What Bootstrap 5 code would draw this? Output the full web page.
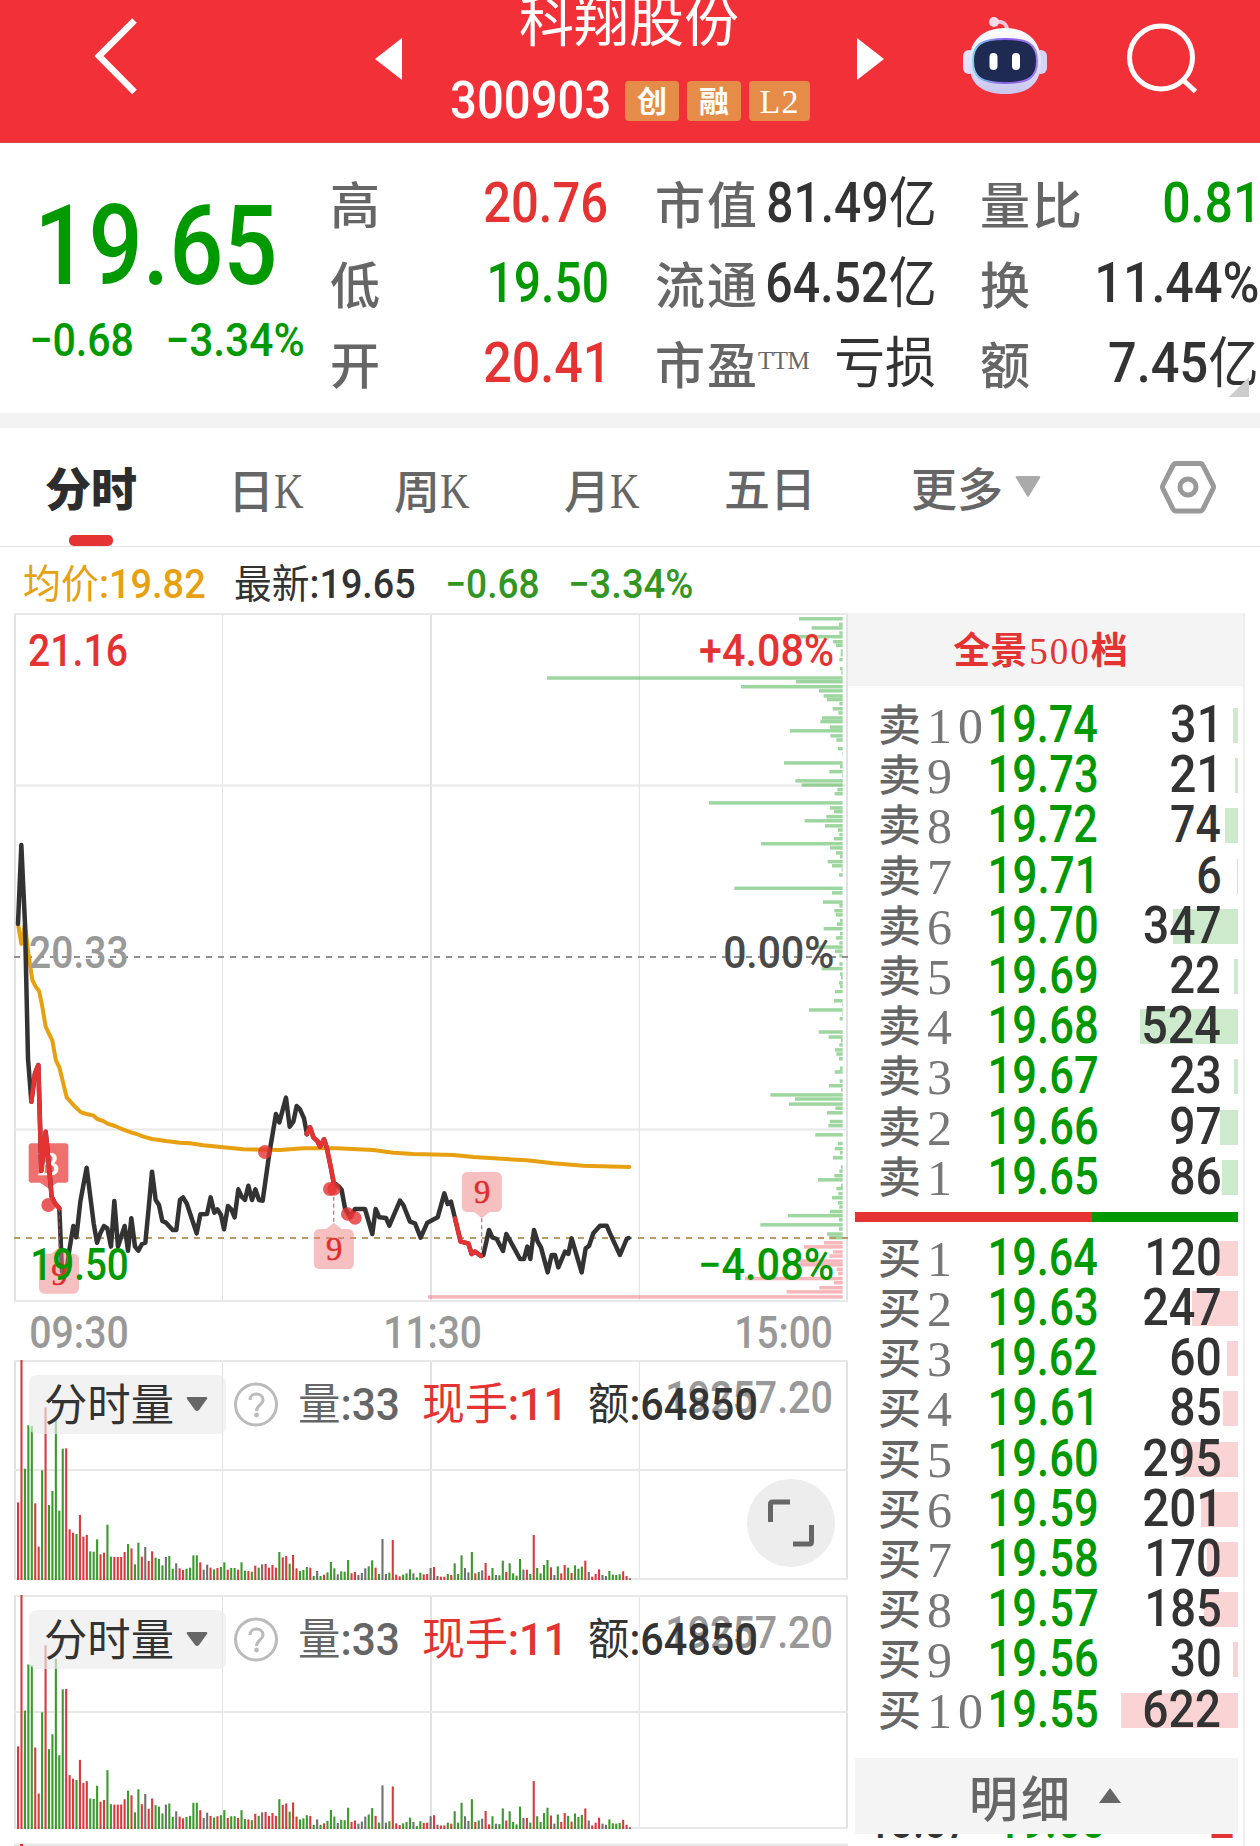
<!DOCTYPE html>
<html lang="zh-CN">
<head>
<meta charset="utf-8">
<meta name="viewport" content="width=device-width, initial-scale=1">
<title>科翔股份 300903</title>
<link href="https://cdn.jsdelivr.net/npm/bootstrap@5.3.0/dist/css/bootstrap.min.css" rel="stylesheet">
<style>
  :root { --up:#e53232; --down:#009900; --ink:#333; --soft:#666; }
  body { width:1260px; height:1846px; overflow:hidden; background:#fff; color:var(--ink);
         font-family:Roboto,"Noto Sans CJK SC",sans-serif; font-weight:500; }
  svg { display:block; flex:none; }
  .up { color:var(--up); } .down { color:var(--down); } .soft { color:var(--soft); }
  .kai { font-family:"Liberation Serif","Noto Sans CJK SC",serif; font-weight:500; color:var(--soft); white-space:nowrap; }
  .fit { display:inline-block; white-space:nowrap; flex:none; }
  .fit > span { display:inline-block; transform-origin:0 50%; }
  .cjk { font-weight:400; }

  .topbar { height:143px; background:#f23037; color:#fff; border-bottom:1px solid #d8464b; }
  .topbar .prev-btn { margin-left:235px; }
  .topbar .ident { margin-left:49px; width:359px; }
  .topbar .title { font-size:55px; line-height:60px; margin-top:-8px; margin-bottom:29px; font-weight:400; text-align:center; padding-right:4px; }
  .topbar .code { font-size:52px; line-height:42px; height:40px; }
  .tagbox { height:40px; width:54px; border-radius:4px; background:#e58c48; color:#fff; font:700 30px/41px "Liberation Serif","Noto Sans CJK SC",serif; text-align:center; }
  .tagbox.wide { width:61px; font-weight:400; font-size:34px; letter-spacing:1px; }

  .quote { height:270px; padding-top:20px; position:relative; }
  .quote .main { width:330px; padding-left:32px; }
  .quote .big { font-size:111px; line-height:80px; padding-top:43px; margin-left:10px; }
  .quote .delta { font-size:46px; line-height:40px; margin-top:34px; }
  .quote .line { height:80px; line-height:81px; font-size:55px; }
  .quote .line .kai { font-size:50px; letter-spacing:2px; line-height:89px; }
  .quote sup { display:inline-block; width:54px; font-size:25px; letter-spacing:-.5px; top:-15px; left:-1px; line-height:0; vertical-align:baseline; position:relative; }
  .colA { width:277px; } .colB { width:279px; margin-left:48px; } .colC { width:278px; margin-left:46px; }
  .corner { position:absolute; right:11px; bottom:16px; }
  .band { height:15px; background:#f3f3f3; }

  .tabs { height:119px; border-bottom:1px solid #e2e2e2; line-height:118px; font-size:47px; }
  .tabs .kai { font-size:46px; line-height:126px; }
  .tabs .kay { display:inline-block; font-size:50px; transform:scaleX(.82); transform-origin:0 50%; }
  .tabs .on { color:#2d2d2d; font-weight:900; position:relative; }
  .tabs .on::after { content:""; position:absolute; left:24px; bottom:0; width:44px; height:11px; border-radius:5px; background:var(--up); }

  .latest { height:66px; line-height:75px; font-size:40px; padding-left:24px; }
  .lower { height:1233px; }
  .charts { width:848px; }
  .volume { position:relative; height:235px; }
  .legend { position:absolute; left:29px; top:15px; height:59px; width:815px; line-height:61px; font-size:44px; }
  .picker { width:197px; height:59px; border-radius:8px; background:rgba(235,235,235,.65); padding-left:16px; line-height:63px; }
  .scale { position:absolute; left:668px; top:8px; line-height:60px; font-size:44px; color:#999; }
  .expand { position:absolute; left:747px; top:119px; }

  .book { width:397px; border-right:2px solid #eee; }
  .book .head { height:73px; background:#f4f4f4; text-align:center; }
  .book .head .kai { color:var(--up); font-size:37px; line-height:77px; padding-right:10px; }
  .book .head .kai span { letter-spacing:2px; padding-left:2px; }
  .lvl { height:50.2px; line-height:54px; font-size:51px; position:relative; padding-left:30px; padding-right:23px; }
  .lvl > * { position:relative; } .lvl > i { position:absolute; }
  .lvl .kai { font-size:43px; width:113px; line-height:58px; display:flex; }
  .lvl .kai b { font-size:50px; line-height:56px; font-weight:400; margin-left:6px; letter-spacing:6px; color:#777; }
  .lvl i { right:5px; top:10px; height:35px; }
  .sell i { background:#cdeacd; } .buy i { background:#fad4d4; }
  .strength { height:10px; margin:12px 5px 9px 7px; }
  .detail { height:76px; margin:25px 5px 0 7px; background:#f4f4f4; }
  .detail .kai { font-size:49px; letter-spacing:3px; line-height:86px; margin-left:114px; }
  .ticks { height:6px; overflow:hidden; font-size:50px; position:relative; padding:0 10px 0 23px; }
  .ticks > div { line-height:36px; height:36px; margin-top:-31px; }
</style>
</head>
<body>
<header class="topbar d-flex align-items-start">
  <svg width="50" height="143" style="margin-left:90px" viewBox="90 0 50 143"><path d="M134.500 20.500L99 56l35.500 36" fill="none" stroke="#fff" stroke-width="6.500"/></svg>
  <svg class="prev-btn" width="27" height="143" viewBox="375 0 27 143"><path d="M375 59l27-21v42z" fill="#fff"/></svg>
  <div class="ident">
    <div class="title"><span class="fit" data-w="218">科翔股份</span></div>
    <div class="code d-flex align-items-center"><span class="fit" data-w="158">300903</span>
      <span class="tagbox" style="margin-left:16px">创</span><span class="tagbox ms-2">融</span><span class="tagbox wide ms-2">L2</span></div>
  </div>
  <svg width="27" height="143" style="margin-left:47px" viewBox="857 0 27 143"><path d="M884 59l-27-21v42z" fill="#fff"/></svg>
  <svg width="86" height="143" style="margin-left:78px" viewBox="962 0 86 143">
    <defs><linearGradient id="shell" x1="0" y1="0" x2="0" y2="1"><stop offset="0" stop-color="#fff"/><stop offset="1" stop-color="#c9c6ef"/></linearGradient>
    <linearGradient id="rim" x1="0" y1="0" x2="1" y2="0"><stop offset="0" stop-color="#7fd0ee"/><stop offset=".5" stop-color="#8a5be8"/><stop offset="1" stop-color="#9a7bf0"/></linearGradient></defs>
    <path d="M995 22q12-2 12 9" fill="none" stroke="#f0c4d8" stroke-width="4"/><circle cx="994" cy="22" r="5" fill="#f4dbe9"/>
    <rect x="963" y="50" width="12" height="24" rx="6" fill="#e3e2fa"/><rect x="1035" y="50" width="12" height="24" rx="6" fill="#d5d4f6"/>
    <path d="M1005 28C1028 28 1041 42 1041 62C1041 84 1028 94 1005 94S969 84 969 62C969 42 982 28 1005 28Z" fill="url(#shell)"/>
    <path d="M1005 39C1028 39 1037 44 1037 61S1028 83 1005 83S973 78 973 61S982 39 1005 39Z" fill="#1e2a52" stroke="url(#rim)" stroke-width="2"/>
    <rect x="989.500" y="53" width="8" height="17" rx="4" fill="#fff"/><rect x="1012" y="53" width="8" height="17" rx="4" fill="#fff"/>
  </svg>
  <svg width="76" height="143" style="margin-left:76px" viewBox="1124 0 76 143"><g fill="none" stroke="#fff" stroke-width="5"><circle cx="1161" cy="57.500" r="31.500"/><path d="M1182 79l13.500 12.500"/></g></svg>
</header>

<section class="quote d-flex">
  <div class="main down">
    <div class="big"><span class="fit" data-w="232">19.65</span></div>
    <div class="delta d-flex"><span class="fit" data-w="100">−0.68</span><span class="fit" data-w="135" style="margin-left:36px">−3.34%</span></div>
  </div>
  <div class="colA">
    <div class="line d-flex justify-content-between"><span class="kai">高</span><span class="fit up" data-w="122">20.76</span></div>
    <div class="line d-flex justify-content-between"><span class="kai">低</span><span class="fit down" data-w="117">19.50</span></div>
    <div class="line d-flex justify-content-between"><span class="kai">开</span><span class="fit up" data-w="117" style="margin-right:5px">20.41</span></div>
  </div>
  <div class="colB">
    <div class="line d-flex justify-content-between"><span class="kai">市值</span><span class="fit" data-w="166"  data-mix>81.49亿</span></div>
    <div class="line d-flex justify-content-between"><span class="kai">流通</span><span class="fit" data-w="166" data-mix>64.52亿</span></div>
    <div class="line d-flex justify-content-between"><span class="kai">市盈<sup>TTM</sup></span><span class="fit cjk" data-w="98">亏损</span></div>
  </div>
  <div class="colC">
    <div class="line d-flex justify-content-between"><span class="kai">量比</span><span class="fit down" data-w="88" style="margin-right:6px">0.81</span></div>
    <div class="line d-flex justify-content-between"><span class="kai">换</span><span class="fit" data-w="160">11.44%</span></div>
    <div class="line d-flex justify-content-between"><span class="kai">额</span><span class="fit" data-w="147" style="margin-right:2px" data-mix>7.45亿</span></div>
  </div>
  <svg class="corner" width="20" height="20"><path d="M20 0v20H0z" fill="#ccc"/></svg>
</section>
<div class="band"></div>

<nav class="tabs d-flex">
  <span class="kai on" style="margin-left:45px;width:94px">分时</span>
  <span class="kai" style="margin-left:89px;width:162px">日<span class="kay">K</span></span>
  <span class="kai" style="width:170px;margin-left:4px">周<span class="kay">K</span></span>
  <span class="kai" style="width:160px">月<span class="kay">K</span></span>
  <span class="kai" style="width:187px">五日</span>
  <span class="kai" style="width:94px">更多</span>
  <svg width="26" height="118" style="margin-left:10px" viewBox="0 0 26 118"><path d="M2 48h22q2 0 1 2L14 68q-1 2-2 0L1 50q-1-2 1-2z" fill="#aaa"/></svg>
  <svg width="60" height="118" style="margin-left:117px" viewBox="0 0 60 118"><g fill="none" stroke="#999" stroke-width="5" stroke-linejoin="round"><path d="M18 35.500h24q2 0 3 2L55 57q1 2 0 4L45 81q-1 2-3 2H18q-2 0-3-2L5 61q-1-2 0-4l10-19.500q1-2 3-2z"/><circle cx="30" cy="59" r="8"/></g></svg>
</nav>

<div class="latest d-flex">
  <span class="fit" data-w="181" data-mix style="color:#e6a010">均价:19.82</span>
  <span class="fit" data-w="180" data-mix style="margin-left:30px">最新:19.65</span>
  <span class="fit" data-w="90" style="margin-left:33px;color:#329623">−0.68</span>
  <span class="fit" data-w="121" style="margin-left:33px;color:#329623">−3.34%</span>
</div>

<main class="lower d-flex">
  <div class="charts">
    <svg id="minute" width="848" height="747" viewBox="0 613 848 747"></svg>
    <div class="volume" data-h="220"></div>
    <div class="volume" data-h="234"></div>
    <svg width="848" height="16" viewBox="0 0 848 16"><path d="M14 15h834" stroke="#e8e8e8" stroke-width="3"/><path d="M21.500 14v2" stroke="#e53232" stroke-width="3"/></svg>
  </div>
  <aside class="book">
    <div class="head"><span class="kai fw-bold">全景<span class="fw-normal">500</span>档</span></div>
    <div class="sell" style="padding-top:12px" id="sells"></div>
    <div class="strength d-flex"><div style="width:62%;background:#e53232"></div><div class="flex-fill" style="background:#009900"></div></div>
    <div class="buy" id="buys"></div>
    <div class="detail d-flex"><span class="kai">明细</span><svg width="22" height="76" style="margin-left:26px"><path d="M0 45l11-15 11 15z" fill="#666"/></svg></div>
    <div class="ticks"><div class="d-flex"><span class="fit" data-w="97">13:57</span><span class="fit down" data-w="104" style="margin-left:32px">19.65</span><span class="fit up ms-auto" data-w="22">2</span></div></div>
  </aside>
</main>

<script src="https://cdn.jsdelivr.net/npm/bootstrap@5.3.0/dist/js/bootstrap.bundle.min.js"></script>
<script>
const FAM = 'Roboto,"Noto Sans CJK SC",sans-serif';
const ctx = document.createElement('canvas').getContext('2d');
const ink = (font, s) => { ctx.font = font; const m = ctx.measureText(s); return { l: m.actualBoundingBoxLeft, w: m.actualBoundingBoxLeft + m.actualBoundingBoxRight }; };

/* svg label whose glyphs run from x0 to x1 */
function label(s, x0, x1, y, fill, size = 44) {
  const k = ink(`500 ${size}px ${FAM}`, s), q = (x1 - x0) / k.w;
  return `<text transform="translate(${x0 + k.l * q} ${y}) scale(${q} 1)" font-size="${size}" fill="${fill}">${s}</text>`;
}

/* order book */
const sells = [['10','19.74',31,5],['9','19.73',21,3],['8','19.72',74,13],['7','19.71',6,1],['6','19.70',347,65],['5','19.69',22,4],['4','19.68',524,98],['3','19.67',23,4],['2','19.66',97,18],['1','19.65',86,16]];
const buys = [['1','19.64',120,22],['2','19.63',247,46],['3','19.62',60,11],['4','19.61',85,15],['5','19.60',295,55],['6','19.59',201,37],['7','19.58',170,31],['8','19.57',185,34],['9','19.56',30,5],['10','19.55',622,117]];
function rows(id, name, list) {
  document.getElementById(id).innerHTML = list.map(([n, p, q, w]) => {
    const t = String(q), one = t.endsWith('1');
    let qw = t.length * 27 - 5; if (t[0] === '1') qw -= 4; if (one) qw -= 5;
    return `<div class="lvl d-flex"><i style="width:${w}px"></i><span class="kai">${name}<b>${n}</b></span>` +
      `<span class="fit down" data-w="${p.endsWith('1') ? 101 : 106}">${p}</span>` +
      `<span class="fit ms-auto" data-w="${qw}" style="margin-right:${one ? 5 : 0}px">${q}</span></div>`;
  }).join('');
}
rows('sells', '卖', sells);
rows('buys', '买', buys);

/* minute chart */
const greenBars = [[41,477],[53,597],[61,515],[72,598],[80,465],[91,579],[99,588],[111,602],[119,602],[130,598],[150,600],[159,604],[170,-279],[178,468],[189,303],[198,537],[209,551],[217,561],[226,598],[237,578],[246,595],[257,546],[265,541],[277,570],[285,450],[296,571],[305,589],[324,594],[335,606],[355,432],[363,600],[374,568],[383,606],[394,466],[403,485],[413,592],[422,584],[442,207],[453,570],[461,582],[472,559],[481,494],[492,555],[501,594],[511,598],[520,582],[531,363],[540,570],[551,588],[559,600],[570,563],[579,576],[588,605],[599,597],[628,283],[638,576],[658,549],[666,598],[677,583],[686,588],[698,600],[706,591],[716,551],[727,600],[736,588],[747,598],[756,528],[765,585],[775,598],[793,598],[803,545],[815,600],[823,603],[834,597],[842,600],[853,585],[873,582],[882,606],[893,507],[901,606],[912,599],[941,536],[952,566],[960,603],[969,598],[980,585],[989,589],[999,597],[1020,600],[1028,584],[1048,599],[1058,567],[1067,603],[1078,391],[1087,465],[1098,447],[1107,586],[1117,561],[1136,569],[1145,565],[1165,526],[1184,594],[1195,584],[1204,600],[1215,579],[1235,603],[1244,598],[1254,583],[1263,534],[1275,603],[1282,589],[1293,595],[1302,576],[1313,594],[1322,598],[1332,570],[1341,444],[1350,597],[1361,361],[1370,597],[1381,561],[1389,567]];
const redBars = [[1400,552],[1409,492],[1420,579],[1429,568],[1440,480],[1448,470],[1458,590],[1467,594],[1478,315],[1487,582],[1498,538],[1507,440],[1518,-636]];
const bars = (list, c) => list.map(([y, x]) => `<rect x="${640 + x / 3}" y="${600 + y / 2.178 - 1.8}" width="${202.700 - x / 3}" height="3.500" fill="${c}"/>`).join('');
const line = (d, c, w) => `<path d="M${d}" stroke="${c}" stroke-width="${w}" fill="none" stroke-linejoin="round" stroke-linecap="round"/>`;
const A = 'transform="translate(0 820) scale(.33333)"', B = 'transform="translate(240 1060) scale(.33333)"';
const grid = (ys, y0, y1) => [15, 222.5, 431, 639.3, 847].map((x, i) => `<path d="M${x} ${y0}V${y1}" stroke="#e2e2e2" stroke-width="${i % 2 ? 1 : 2}"/>`).join('') +
  ys.map(y => `<path d="M14 ${y}H848" stroke="#e8e8e8" stroke-width="2"/>`).join('');

document.getElementById('minute').innerHTML =
  grid([614, 785.5, 1129.5, 1301], 613, 1302) +
  bars(greenBars, 'rgba(40,165,45,.45)') + bars(redBars, 'rgba(235,80,90,.42)') +
  `<path d="M14 957H848" stroke="#909090" stroke-width="2" stroke-dasharray="6 6"/><path d="M14 1238H848" stroke="#b89d66" stroke-width="2" stroke-dasharray="6 6"/>` +
  `<g ${A}><path d="M94 970h103q8 0 8 8v102q0 8-8 8H171L147 1106 120 1088H94q-8 0-8-8V978q0-8 8-8z" fill="#f07070"/>
   <text x="146" y="1066" text-anchor="middle" font-family="Liberation Serif" font-weight="400" font-size="98" fill="#fff" stroke="#fff" stroke-width="2">B</text></g>` +
  `<g ${A}>` +
  line('54,312 64,372 75,312 85,400 97,480 107,500 117,512 126,555 137,620 157,662 168,722 178,742 200,832 222,857 243,877 260,882 281,887 292,897 312,904 322,911 345,918 368,928 395,938 410,942 430,950 456,957 498,963 540,968 570,970 610,976 670,982 730,988 840,990 910,985 1010,985 1120,990 1180,998 1240,1002 1360,1005 1420,1011 1580,1021 1660,1030 1750,1037 1888,1041', '#e6a010', 12) +
  line('54,312 64,75 75,312 84,715 94,845 105,760 115,735 124,1052 137,935 147,1040 155,1130 165,1150 178,1165 186,1355 198,1360 208,1290 220,1218 229,1252 241,1145 260,1043 281,1210 291,1268 301,1240 312,1218 322,1225 333,1280 343,1143 354,1280 374,1218 384,1292 394,1195 405,1280 415,1292 426,1272 436,1268 446,1165 456,1055 467,1140 477,1155 487,1203 498,1208 518,1230 529,1230 540,1140 549,1132 560,1150 590,1240 601,1183 621,1182 632,1132 643,1178 652,1168 663,1185 672,1228 684,1158 694,1168 704,1192 715,1108 725,1130 735,1140 745,1097 756,1140 766,1108 777,1140 788,1142 808,1000 828,882 838,907 858,833 869,920 880,905 890,858 900,868 912,895 921,943', '#333', 13.5) +
  line('94,845 105,760 115,735 124,1052 137,935 147,1040 155,1130 165,1150 178,1165', '#e53232', 13.5) +
  `<path d="M178 1165V1285" stroke="#c33" stroke-width="4" stroke-dasharray="12 9"/></g>` +
  `<g ${B}>` +
  line('200,222 210,202 220,232 232,243 240,260 252,238 260,262 272,320 281,368 295,378 305,390 315,445 330,470 345,447 375,447 397,522 407,447 418,472 438,474 448,497 480,422 490,435 510,485 525,490 542,533 562,488 593,472 613,400 623,432 633,425 645,475 662,545 685,550 695,582 705,575 723,588 730,585 747,510 757,532 770,537 789,573 799,522 820,560 840,597 852,597 862,560 871,597 882,510 893,545 903,562 923,637 935,585 945,585 955,622 975,575 985,582 995,535 1025,637 1037,565 1047,558 1060,520 1080,497 1100,497 1110,520 1140,585 1160,537 1166,534', '#333', 13.5) +
  line('200,222 210,202 220,232 232,243 240,260 252,238 260,262 272,320 281,368', '#e53232', 13.5) +
  line('645,475 662,545 685,550 695,582 705,575 723,588', '#e53232', 13.5) +
  `<path d="M281 410V487M725 475V580" stroke="#c77" stroke-width="4" stroke-dasharray="12 9"/></g>` +
  `<g ${A} fill="rgba(229,50,50,.8)"><circle cx="145" cy="1155" r="21"/><circle cx="795" cy="996" r="21"/><circle cx="990" cy="1107" r="21"/><circle cx="1002" cy="1107" r="20"/><circle cx="1043" cy="1182" r="20"/><circle cx="1065" cy="1194" r="20"/></g>` +
  [[177, 1361, -1], [1001.5, 1287, -1], [1445.5, 1116, 1]].map(([x, y, d]) =>
    `<g ${A}><g fill="rgb(240,130,130)" opacity=".5"><rect x="${x - 60}" y="${y - 60}" width="120" height="120" rx="16"/><path d="M${x - 24} ${y + d * 59}L${x} ${y + d * 79}L${x + 24} ${y + d * 59}z"/></g>
     <text x="${x + 1}" y="${y + 33}" text-anchor="middle" font-family="Liberation Serif" font-weight="400" font-size="98" fill="#e02c2c" stroke="#e02c2c" stroke-width="1.500">9</text></g>`).join('') +
  label('21.16', 29, 127, 666, '#e53232') + label('+4.08%', 700, 833, 666, '#e53232') +
  label('20.33', 30, 127, 968, '#999') + label('0.00%', 725, 833, 968, '#4a4a4a') +
  label('19.50', 33, 127, 1280, '#009900') + label('−4.08%', 701, 833, 1280, '#009900') +
  label('09:30', 31, 127, 1348, '#999') + label('11:30', 386, 480, 1348, '#999') + label('15:00', 737, 831, 1348, '#999');

/* volume panels: top edge on a 660-unit scale and a colour key per minute */
const vol = '607r 180r 506g 376g 378g 610r 740r 511g 322r 615g 573g 360g 632g 446g 445r 688r 698r 702g 645r 710r 705r 754g 755g 718g 763r 758r 674g 770g 771r 771r 771r 756r 732g 745r 793g 728g 770r 741k 783r 754r 773g 777g 796g 771k 768g 806g 790k 805r 810r 806g 803g 766g 766g 787r 809k 794k 803r 808g 804r 801g 787g 809r 804g 804g 809r 787g 812g 813r 815g 797r 803g 793k 792r 803r 795r 803r 756g 772r 768r 791g 765r 805r 813g 810g 801g 803r 828g 813k 828g 824r 817g 786g 805g 823k 814g 815g 780g 820r 816r 825k 819k 805k 799g 781g 803r 822g 717k 822k 818g 720r 824r 829r 824g 820g 808g 820k 832g 818g 823r 822r 804k 801r 828k 830r 830r 822g 825r 790g 822g 766g 804k 817k 756g 820r 816g 811k 789r 827r 804g 825k 826g 782g 816r 790g 820g 827g 777g 809k 809r 822g 705r 804g 820g 795g 780g 802r 825k 799g 820r 795r 803g 819r 796g 806g 800g 782r 816k 830r 822r 808r 825k 828k 813g 824g 825g 823g 814r 828r 835k'.split(' ');
const tone = { r: '#d93a3c', g: '#3a9a2c', k: '#707070' };
document.querySelectorAll('.volume').forEach((el, n) => {
  const h = +el.dataset.h;
  const b = vol.map((v, i) => { const t = (840 - parseInt(v)) / 660 * h; return `<rect x="${17 + i * 3.438}" y="${h - t}" width="2.100" height="${t}" fill="${tone[v.slice(-1)]}"/>`; }).join('');
  el.innerHTML = `<svg width="848" height="235" viewBox="0 0 848 235">${grid([1, n ? 117 : 110, h - 1], 0, h)}${b}</svg>
  <div class="scale"><span class="fit" data-w="163">19257.20</span></div>
  <div class="legend d-flex"><div class="picker d-flex cjk"><span class="fit" data-w="128">分时量</span>
    <svg width="22" height="59" style="margin-left:13px"><path d="M2 22h18q2 0 1 2L13 35q-2 2-4 0L1 24q-1-2 1-2z" fill="#666"/></svg></div>
    <svg width="46" height="59" style="margin-left:7px"><circle cx="23" cy="29.500" r="20.500" fill="none" stroke="#bbb" stroke-width="3"/><path d="M17 25c0-8 13-8 13 0 0 5-6.500 5-6.500 11" fill="none" stroke="#bbb" stroke-width="3"/><circle cx="23.500" cy="40" r="2.400" fill="#bbb"/></svg>
    <span class="fit soft" data-mix data-w="98" style="margin-left:21px">量:33</span>
    <span class="fit up" data-mix data-w="137" style="margin-left:25px">现手:11</span>
    <span class="fit" data-mix data-w="167" style="margin-left:29px">额:64850</span></div>
  ${n ? '' : '<svg class="expand" width="88" height="88"><circle cx="44" cy="44" r="44" fill="#ededed"/><path d="M23.500 43V25q0-2 2-2H43M64.500 46v17q0 2-2 2H46" fill="none" stroke="#666" stroke-width="5"/></svg>'}`;
});

/* condense each figure so its ink spans data-w pixels; Chinese parts of a mixed label take the regular weight */
document.querySelectorAll('.fit').forEach(el => {
  const s = el.textContent, cs = getComputedStyle(el), size = cs.fontSize, w = +el.dataset.w;
  const parts = 'mix' in el.dataset ? s.match(/[\u4e00-\u9fff]+|[^\u4e00-\u9fff]+/g) : [s];
  const fonts = parts.map(p => `${'mix' in el.dataset && /[\u4e00-\u9fff]/.test(p) ? 400 : cs.fontWeight} ${size} ${FAM}`);
  const first = ink(fonts[0], parts[0]);
  let total = first.l;
  parts.forEach((p, i) => { const k = ink(fonts[i], p); total += i < parts.length - 1 ? ctx.measureText(p).width : k.w - k.l; });
  const q = w / total;
  el.innerHTML = `<span>${parts.map((p, i) => fonts[i].startsWith('400') ? `<span class="cjk">${p}</span>` : p).join('')}</span>`;
  el.style.width = w + 'px';
  el.firstChild.style.transform = `translateX(${first.l * q}px) scaleX(${q})`;
});
</script>
</body>
</html>
